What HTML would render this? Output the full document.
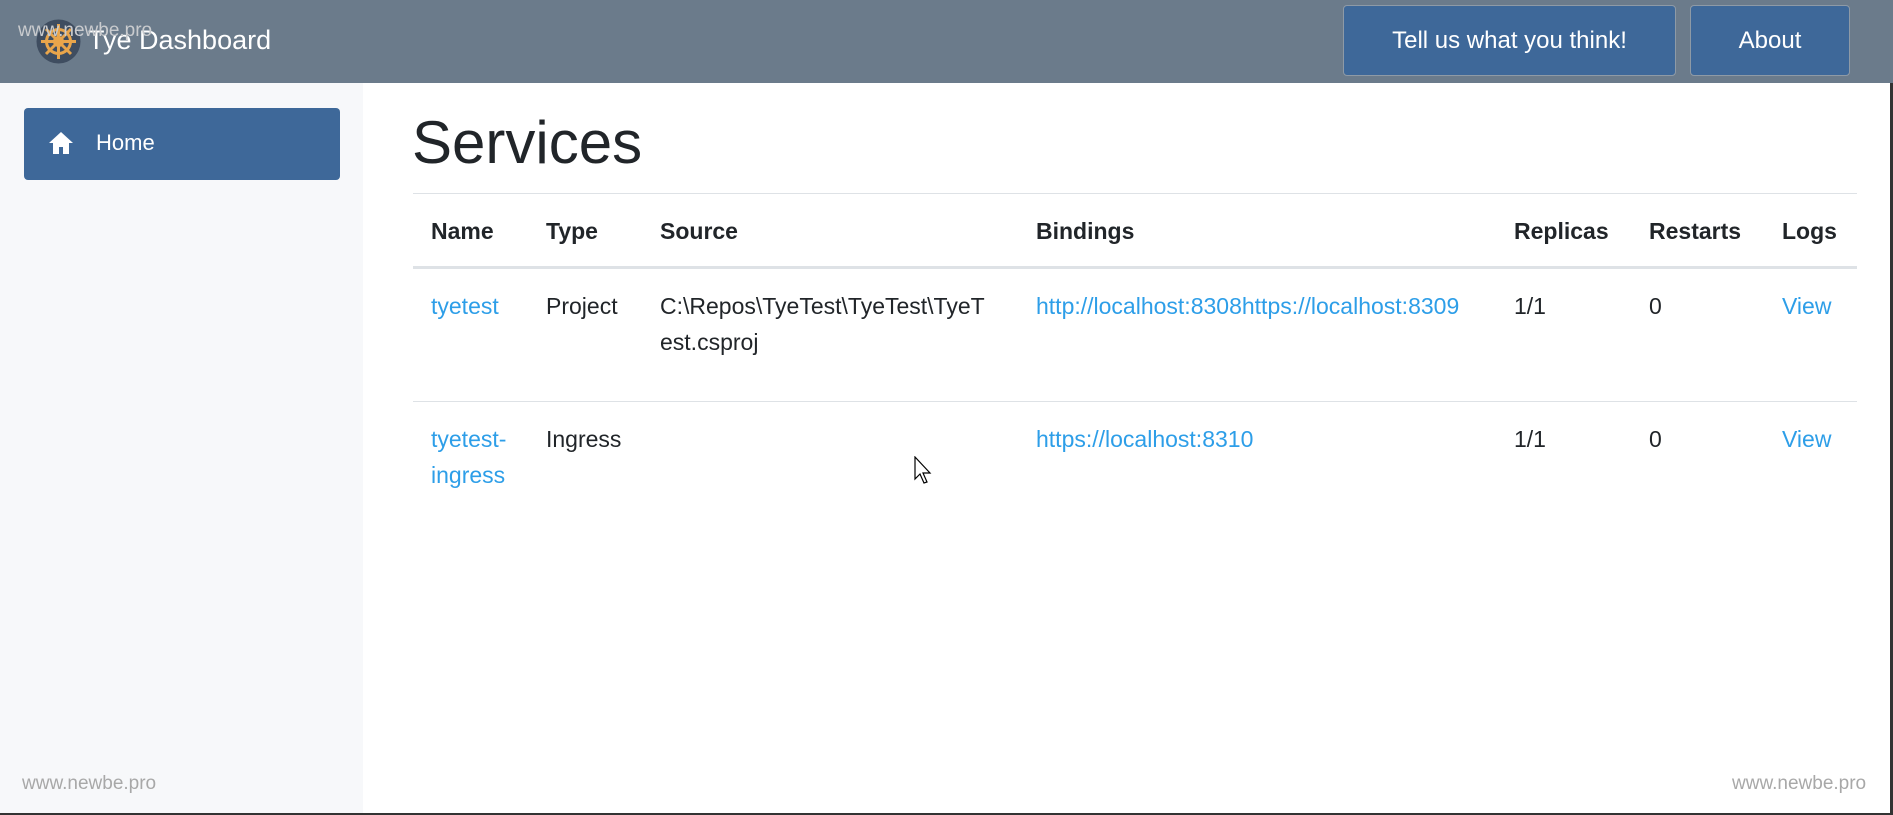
<!DOCTYPE html>
<html><head><meta charset="utf-8"><style>
*{margin:0;padding:0;box-sizing:border-box}
body{width:1893px;height:815px;overflow:hidden;background:#fff;font-family:"Liberation Sans",Arial,sans-serif;position:relative;color:#212529}
.hdr{position:absolute;left:0;top:0;width:1893px;height:83px;background:#6b7b8b}
.side{position:absolute;left:0;top:83px;width:363px;height:732px;background:#f7f8fa}
.home{position:absolute;left:24px;top:108px;width:316px;height:72px;background:#3e6899;border-radius:4px;color:#fff;font-size:22px}
.btn{position:absolute;top:5px;height:71px;background:#3e6899;border:1px solid #8e9aa6;border-radius:4px;color:#fff;font-size:24px;text-align:center;line-height:69px}
.a{position:absolute;font-size:23px;white-space:nowrap}
.th{font-weight:bold}
.lk{color:#2d9ee8}
.wm{position:absolute;color:#a8a8a8;font-size:19px}
</style></head><body>
<div class="hdr"></div>
<svg style="position:absolute;left:36px;top:19px" width="45" height="45" viewBox="0 0 45 45">
<circle cx="22.5" cy="22.5" r="22" fill="#3f4d60"/>
<g stroke="#e9a54b" stroke-width="3" fill="none"><circle cx="22.5" cy="22.5" r="12"/><circle cx="22.5" cy="22.5" r="4"/>
<path d="M22.5 5v35M5 22.5h35M10 10l25 25M35 10L10 35"/></g></svg>
<div style="position:absolute;left:88px;top:25px;color:#fff;font-size:27px">Tye Dashboard</div>
<div class="wm" style="left:18px;top:20px;font-size:19px;color:#c9cbce">www.newbe.pro</div>
<div class="btn" style="left:1343px;width:333px">Tell us what you think!</div>
<div class="btn" style="left:1690px;width:160px">About</div>
<div style="position:absolute;right:0;top:83px;width:3px;height:732px;background:#333"></div>
<div class="side"></div>
<div class="home"><svg style="position:absolute;left:24px;top:23px" width="26" height="24" viewBox="0 0 26 24"><path d="M13 1L1 12h4v11h6v-7h4v7h6V12h4z" fill="#fff"/></svg><span style="position:absolute;left:72px;top:22px">Home</span></div>
<div style="position:absolute;left:412px;top:108px;font-size:60px;color:#212529">Services</div>
<div style="position:absolute;left:413px;top:193px;width:1444px;height:1px;background:#dee2e6"></div>
<div style="position:absolute;left:413px;top:266px;width:1444px;height:3px;background:#dee2e6"></div>
<div style="position:absolute;left:413px;top:401px;width:1444px;height:1px;background:#dee2e6"></div>
<div class="a th" style="left:431px;top:218px">Name</div>
<div class="a th" style="left:546px;top:218px">Type</div>
<div class="a th" style="left:660px;top:218px">Source</div>
<div class="a th" style="left:1036px;top:218px">Bindings</div>
<div class="a th" style="left:1514px;top:218px">Replicas</div>
<div class="a th" style="left:1649px;top:218px">Restarts</div>
<div class="a th" style="left:1782px;top:218px">Logs</div>
<div class="a lk" style="left:431px;top:293px">tyetest</div>
<div class="a" style="left:546px;top:293px">Project</div>
<div class="a" style="left:660px;top:293px">C:\Repos\TyeTest\TyeTest\TyeT</div>
<div class="a" style="left:660px;top:329px">est.csproj</div>
<div class="a lk" style="left:1036px;top:293px">http://localhost:8308https://localhost:8309</div>
<div class="a" style="left:1514px;top:293px">1/1</div>
<div class="a" style="left:1649px;top:293px">0</div>
<div class="a lk" style="left:1782px;top:293px">View</div>
<div class="a lk" style="left:431px;top:426px">tyetest-</div>
<div class="a lk" style="left:431px;top:462px">ingress</div>
<div class="a" style="left:546px;top:426px">Ingress</div>
<div class="a lk" style="left:1036px;top:426px">https://localhost:8310</div>
<div class="a" style="left:1514px;top:426px">1/1</div>
<div class="a" style="left:1649px;top:426px">0</div>
<div class="a lk" style="left:1782px;top:426px">View</div>
<svg style="position:absolute;left:914px;top:456px" width="18" height="28" viewBox="0 0 18 28"><path d="M1 1v22l5-5 4 9 3-1-4-9h7z" fill="#fff" stroke="#000" stroke-width="1.2"/></svg>
<div class="wm" style="left:22px;top:773px">www.newbe.pro</div>
<div class="wm" style="left:1732px;top:773px">www.newbe.pro</div>
<div style="position:absolute;left:0;top:813px;width:1893px;height:2px;background:#333"></div>
</body></html>
